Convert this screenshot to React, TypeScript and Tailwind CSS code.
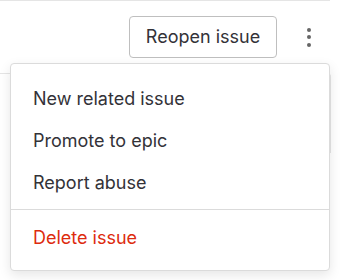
import React from 'react'

const items = ['New related issue', 'Promote to epic', 'Report abuse']

export default function App() {
  return (
    <div className="relative w-[344px] h-[280px] overflow-hidden bg-white font-['Inter',sans-serif] text-[#333238]">
      {/* page header line */}
      <div className="w-[330px] border-t border-[#e5e5e5]" />

      {/* actions row */}
      <div className="flex items-center justify-end pt-[15px] pr-[22px]">
        <button className="h-[42px] w-[148px] rounded-[4px] border border-[#bfbfbf] bg-white text-[18px] leading-none text-[#333238]">
          Reopen issue
        </button>
        <button className="ml-[18px] flex w-[27px] h-[40px] flex-col items-center justify-center gap-[3.5px]">
          <span className="h-1 w-1 rounded-full bg-[#666666]" />
          <span className="h-1 w-1 rounded-full bg-[#666666]" />
          <span className="h-1 w-1 rounded-full bg-[#666666]" />
        </button>
      </div>

      {/* content behind the menu */}
      <div className="mt-[15px] h-[80px] w-[331px] rounded-tr-[4px] border-t border-r border-[#e5e5e5]" />

      {/* dropdown menu */}
      <div className="absolute left-[10px] top-[63px] w-[320px] rounded-[4px] border border-[#dbdbdb] bg-white pt-[13px] pb-[12px] shadow-[0_4px_12px_rgba(0,0,0,0.1)]">
        {items.map((label) => (
          <div key={label} className="flex h-[42px] items-center px-[22px] text-[18px]">
            {label}
          </div>
        ))}
        <div className="my-[6px] border-t border-[#dbdbdb]" />
        <div className="flex h-[42px] items-center px-[22px] text-[18px] text-[#dd2b0e]">
          Delete issue
        </div>
      </div>
    </div>
  )
}
